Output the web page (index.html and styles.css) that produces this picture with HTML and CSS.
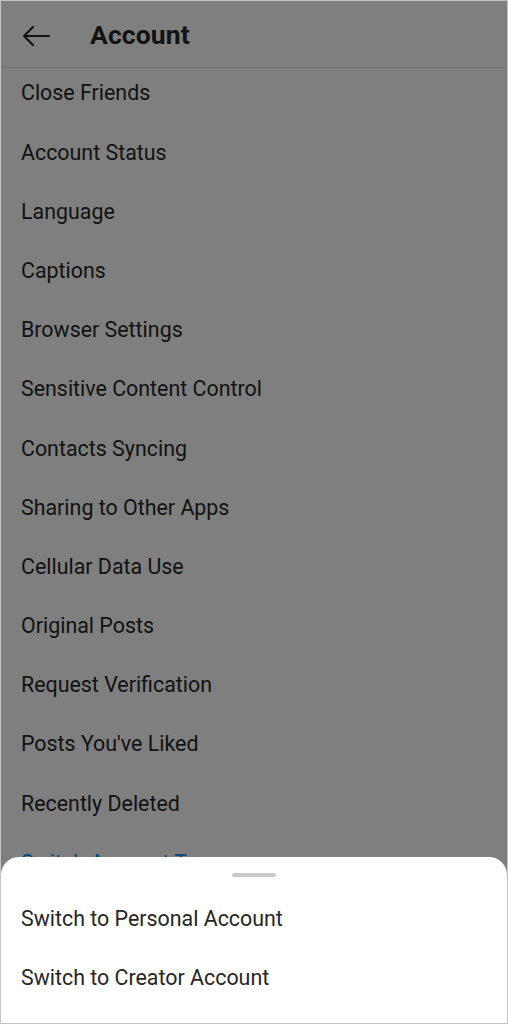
FILE: index.html
```html
<!DOCTYPE html>
<html lang="en">
<head>
<meta charset="utf-8">
<title>Account</title>
<link rel="stylesheet" href="styles.css">
</head>
<body>
<div class="screen">
  <header class="topbar">
    <svg class="back" width="30" height="24" viewBox="0 0 30 24" aria-hidden="true">
      <path d="M28 12 H3 M12 3 L3 12 L12 21" fill="none" stroke="#262626" stroke-width="2.2" stroke-linecap="round" stroke-linejoin="round"/>
    </svg>
    <h1 class="title">Account</h1>
  </header>
  <ul class="menu">
    <li>Close Friends</li>
    <li>Account Status</li>
    <li>Language</li>
    <li>Captions</li>
    <li>Browser Settings</li>
    <li>Sensitive Content Control</li>
    <li>Contacts Syncing</li>
    <li>Sharing to Other Apps</li>
    <li>Cellular Data Use</li>
    <li>Original Posts</li>
    <li>Request Verification</li>
    <li>Posts You've Liked</li>
    <li>Recently Deleted</li>
    <li class="link">Switch Account Type</li>
  </ul>
  <div class="scrim"></div>
  <div class="sheet">
    <div class="handle"></div>
    <div class="option">Switch to Personal Account</div>
    <div class="option">Switch to Creator Account</div>
  </div>
</div>
</body>
</html>
```

FILE: styles.css
```css
* { box-sizing: border-box; }
html, body { margin: 0; padding: 0; }
body {
  font-family: Roboto, "Noto Sans", "Liberation Sans", sans-serif;
  color: #262626;
  background: #ffffff;
}
.screen {
  position: relative;
  width: 508px;
  height: 1024px;
  overflow: hidden;
  background: #ffffff;
  border: 1px solid #c4c4c4;
}
.topbar {
  position: relative;
  z-index: 1;
  height: 67px;
  display: flex;
  align-items: center;
  padding-left: 20px;
  background: #ffffff;
  border-bottom: 1px solid #dedede;
}
.back { display: block; margin-top: 3px; }
.title {
  margin: 0 0 0 39px;
  font-size: 26.5px;
  font-weight: 700;
  letter-spacing: 0.1px;
  line-height: 1;
  padding-top: 3px;
}
.menu {
  list-style: none;
  margin: -6px 0 0;
  padding: 0;
}
.menu li {
  height: 59.2px;
  display: flex;
  align-items: center;
  padding-left: 20px;
  font-size: 21.4px;
  line-height: 1;
  padding-top: 3px;
}
.menu li.link { color: #0095f6; }
.scrim {
  position: absolute;
  inset: 0;
  background: rgba(0, 0, 0, 0.5);
  z-index: 2;
}
.sheet {
  position: absolute;
  left: 0;
  right: 0;
  bottom: 0;
  height: 166px;
  z-index: 3;
  background: #ffffff;
  border-radius: 18px 18px 0 0;
  padding-top: 16px;
}
.handle {
  width: 44px;
  height: 4px;
  border-radius: 2px;
  background: #c9c9c9;
  margin: 0 auto 11px;
}
.option {
  height: 59px;
  display: flex;
  align-items: center;
  padding-left: 20px;
  font-size: 21.4px;
  line-height: 1;
  padding-top: 3px;
  color: #262626;
}
```
